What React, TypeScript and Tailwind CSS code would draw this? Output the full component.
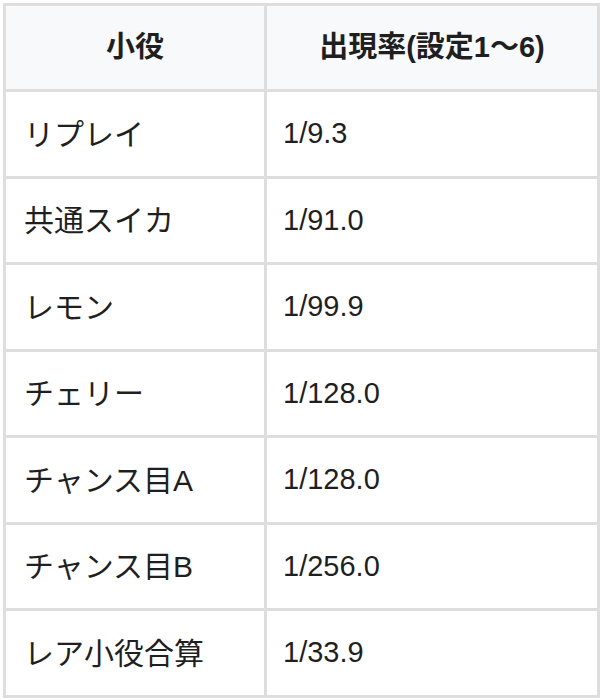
import React from "react";

interface Row {
  name: string;
  rate: string;
}

const rows: Row[] = [
  { name: "リプレイ", rate: "1/9.3" },
  { name: "共通スイカ", rate: "1/91.0" },
  { name: "レモン", rate: "1/99.9" },
  { name: "チェリー", rate: "1/128.0" },
  { name: "チャンス目A", rate: "1/128.0" },
  { name: "チャンス目B", rate: "1/256.0" },
  { name: "レア小役合算", rate: "1/33.9" },
];

// 行の高さ (86/87px ピッチに合わせるため交互)
const rowHeights = ["h-[84px]", "h-[83px]", "h-[84px]", "h-[83px]", "h-[84px]", "h-[83px]", "h-[84px]"];

const App = () => {
  return (
    <div
      className="w-[605px] h-[700px] bg-white pt-[3px] pl-[3px] text-[#1f1f1f]"
      style={{ fontFamily: '"Liberation Sans", "Noto Sans CJK JP", sans-serif' }}
    >
      <div className="w-[597px] bg-[#dedede] p-[3px] grid grid-cols-[258px_330px] gap-[3px]">
        {/* ヘッダー */}
        <div className="h-[83px] bg-[#f8f9fa] flex items-center justify-center text-[29px] font-bold">
          小役
        </div>
        <div className="h-[83px] bg-[#f8f9fa] flex items-center justify-center text-[29px] font-bold">
          出現率(設定1〜6)
        </div>

        {rows.map((row, i) => (
          <React.Fragment key={row.name}>
            <div className={`${rowHeights[i]} bg-white flex items-center pl-[18px] text-[30px]`}>
              {row.name}
            </div>
            <div className={`${rowHeights[i]} bg-white flex items-center pl-[16px] text-[29px]`}>
              {row.rate}
            </div>
          </React.Fragment>
        ))}
      </div>
    </div>
  );
};

export default App;
